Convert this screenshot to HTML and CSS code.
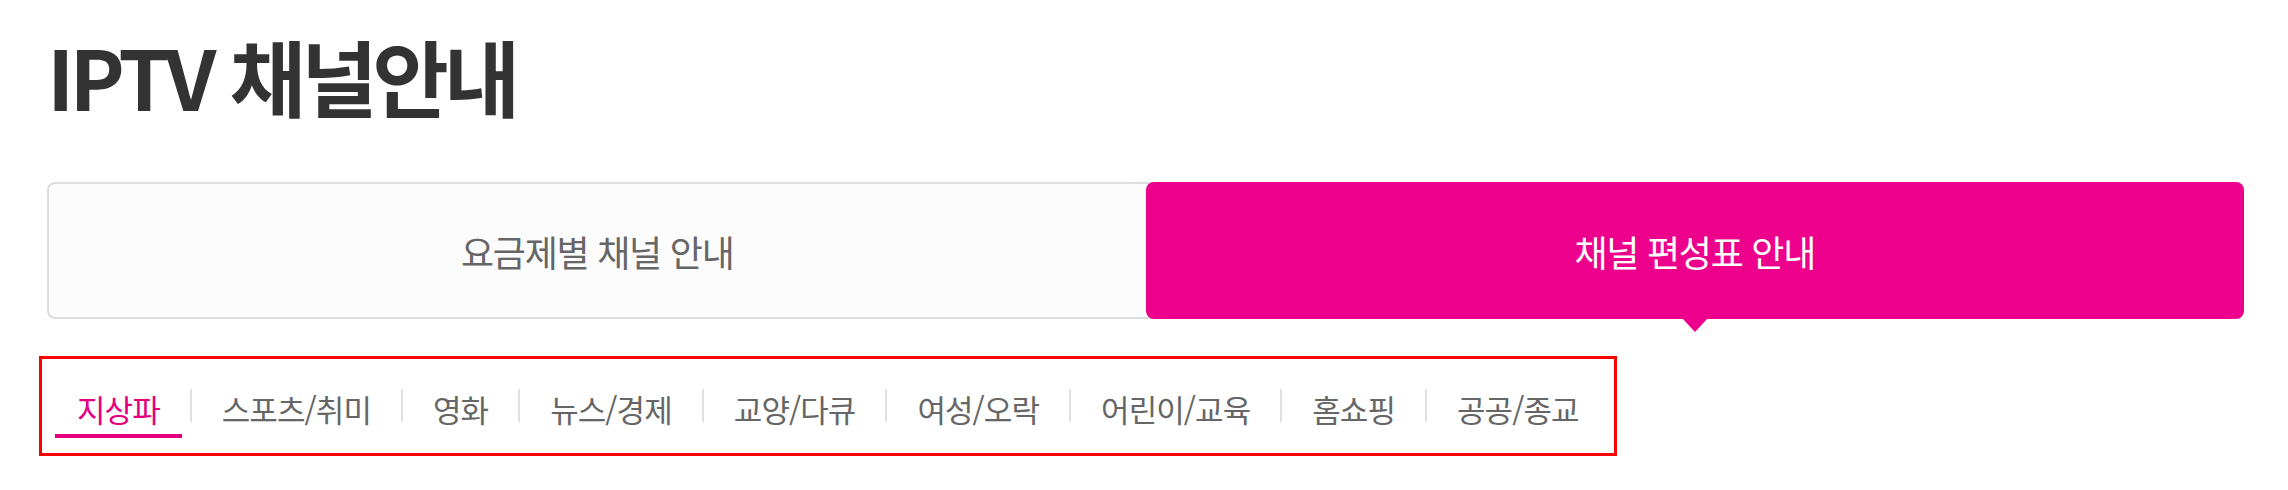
FILE: index.html
```html
<!DOCTYPE html>
<html lang="ko">
<head>
<meta charset="utf-8">
<title>IPTV 채널안내</title>
<link rel="stylesheet" href="styles.css">
</head>
<body>
<div class="page">
  <h1 class="title">IPTV 채널안내</h1>
  <div class="tabs">
    <a class="tab" href="#">요금제별 채널 안내</a>
    <a class="tab tab-active" href="#">채널 편성표 안내</a>
  </div>
  <ul class="cats">
    <li class="cat"><a class="cat-link cat-active" href="#">지상파</a></li>
    <li class="cat"><a class="cat-link" href="#">스포츠/취미</a></li>
    <li class="cat"><a class="cat-link" href="#">영화</a></li>
    <li class="cat"><a class="cat-link" href="#">뉴스/경제</a></li>
    <li class="cat"><a class="cat-link" href="#">교양/다큐</a></li>
    <li class="cat"><a class="cat-link" href="#">여성/오락</a></li>
    <li class="cat"><a class="cat-link" href="#">어린이/교육</a></li>
    <li class="cat"><a class="cat-link" href="#">홈쇼핑</a></li>
    <li class="cat"><a class="cat-link" href="#">공공/종교</a></li>
  </ul>
</div>
</body>
</html>
```

FILE: styles.css
```css
html {
  overflow: hidden;
}

body {
  margin: 0;
  padding: 0;
  background: #ffffff;
}

.page {
  padding: 34px 44px 20px 47px;
  font-family: "Noto Sans CJK KR", "Noto Sans", sans-serif;
  color: #333333;
}

.title {
  margin: 0;
  font-size: 83px;
  line-height: 1;
  font-weight: 700;
  letter-spacing: -0.06em;
  color: #333333;
}

.tabs {
  margin-top: 65px;
  display: grid;
  grid-template-columns: 1fr 1fr;
  height: 133px;
  border: 2px solid #dddddd;
  border-radius: 8px;
  background: #fcfcfc;
}

.tab {
  display: flex;
  align-items: center;
  justify-content: center;
  font-size: 36px;
  letter-spacing: -0.035em;
  color: #666666;
  text-decoration: none;
}

.tab-active {
  position: relative;
  margin: -2px -2px -2px 0;
  background: #ec008c;
  color: #ffffff;
  border-radius: 8px;
}

.tab-active::after {
  content: "";
  position: absolute;
  left: 50%;
  bottom: -13px;
  transform: translateX(-50%);
  border-left: 13px solid transparent;
  border-right: 13px solid transparent;
  border-top: 14px solid #ec008c;
}

.cats {
  list-style: none;
  margin: 45px 0 0 0;
  padding: 0 0 10px 0;
  display: flex;
  width: max-content;
  outline: 3px solid #ff0000;
  outline-offset: 5px;
}

.cat {
  display: flex;
  align-items: center;
}

.cat + .cat::before {
  content: "";
  width: 2px;
  height: 33px;
  margin-top: 8px;
  background: #e0e0e0;
}

.cat-link {
  display: block;
  margin: 0 8px;
  padding: 26px 22px 7px;
  border-bottom: 4px solid transparent;
  font-size: 31px;
  line-height: 1.2;
  letter-spacing: -0.03em;
  color: #666666;
  text-decoration: none;
}

.cat-active {
  color: #e3007f;
  border-bottom-color: #e3007f;
}
```
